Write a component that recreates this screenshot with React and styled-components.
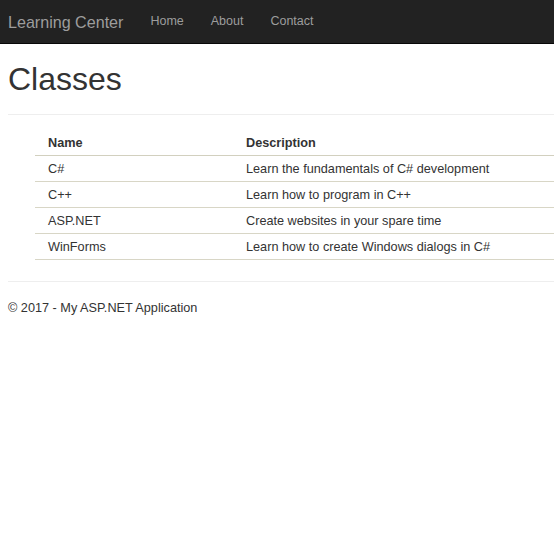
import React from "react";
import styled, { createGlobalStyle } from "styled-components";

const GlobalStyle = createGlobalStyle`
  html, body {
    margin: 0;
    padding: 0;
    background: #fff;
  }
  body {
    font-family: "Liberation Sans", Arial, sans-serif;
    font-size: 12.7px;
    line-height: 1.42857;
    color: #333;
  }
`;

const Navbar = styled.nav`
  height: 43px;
  background-color: #222;
  border-bottom: 1px solid #080808;
  display: flex;
  align-items: center;
  padding: 0 8px;
`;

const Brand = styled.a`
  font-size: 16.1px;
  color: #9d9d9d;
  text-decoration: none;
  margin-right: 27px;
  margin-top: 1px;
`;

const NavList = styled.ul`
  list-style: none;
  display: flex;
  gap: 27px;
  margin: 0;
  padding: 0;
`;

const NavLink = styled.a`
  font-size: 12.5px;
  color: #9d9d9d;
  text-decoration: none;
`;

const Main = styled.main`
  padding-left: 8px;
`;

const Heading = styled.h1`
  font-size: 32px;
  font-weight: 500;
  line-height: 1.1;
  margin: 18px 0 17px;
  color: #333;
`;

const Rule = styled.hr`
  border: 0;
  border-top: 1px solid #eee;
  margin: ${({ $gap }) => $gap || "0"};
`;

const Table = styled.table`
  border-collapse: collapse;
  margin: 14px 0 0 27px;
  width: calc(100% - 27px);
`;

const HeadCell = styled.th`
  text-align: left;
  font-weight: bold;
  padding: 5px 13px 3px;
  line-height: 18px;
  border-bottom: 1px solid #d2d0bf;
  width: ${({ $w }) => $w || "auto"};
`;

const Cell = styled.td`
  padding: 5px 13px 3px;
  line-height: 17px;
  border-bottom: 1px solid #d8d6c6;
`;

const Footer = styled.footer`
  padding-top: 17px;
  line-height: 18px;
`;

const classes = [
  { name: "C#", description: "Learn the fundamentals of C# development" },
  { name: "C++", description: "Learn how to program in C++" },
  { name: "ASP.NET", description: "Create websites in your spare time" },
  { name: "WinForms", description: "Learn how to create Windows dialogs in C#" },
];

export default function App() {
  return (
    <>
      <GlobalStyle />
      <Navbar>
        <Brand href="#">Learning Center</Brand>
        <NavList>
          <li><NavLink href="#">Home</NavLink></li>
          <li><NavLink href="#">About</NavLink></li>
          <li><NavLink href="#">Contact</NavLink></li>
        </NavList>
      </Navbar>
      <Main>
        <Heading>Classes</Heading>
        <Rule />
        <Table>
          <thead>
            <tr>
              <HeadCell $w="172px">Name</HeadCell>
              <HeadCell>Description</HeadCell>
            </tr>
          </thead>
          <tbody>
            {classes.map((c) => (
              <tr key={c.name}>
                <Cell>{c.name}</Cell>
                <Cell>{c.description}</Cell>
              </tr>
            ))}
          </tbody>
        </Table>
        <Rule $gap="21px 0 0" />
        <Footer>© 2017 - My ASP.NET Application</Footer>
      </Main>
    </>
  );
}
